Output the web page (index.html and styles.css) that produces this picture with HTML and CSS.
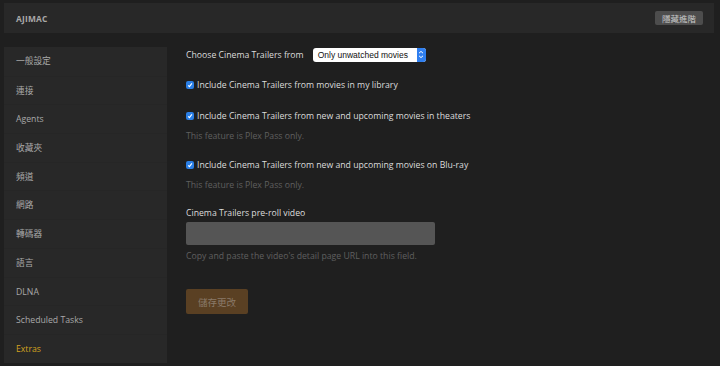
FILE: index.html
```html
<!DOCTYPE html>
<html lang="zh-Hant">
<head>
    <meta charset="UTF-8">
    <title>Extras - AJIMAC</title>
    <link rel="stylesheet" href="styles.css">
</head>
<body>
    <div class="top-bar">
        <div class="server-name">AJIMAC</div>
        <button class="advanced-btn">隱藏進階</button>
    </div>

    <div class="settings">
        <ul class="side-nav">
            <li>一般設定</li>
            <li>連接</li>
            <li>Agents</li>
            <li>收藏夾</li>
            <li>頻道</li>
            <li>網路</li>
            <li>轉碼器</li>
            <li>語言</li>
            <li>DLNA</li>
            <li>Scheduled Tasks</li>
            <li class="active">Extras</li>
        </ul>

        <div class="settings-form">
            <div class="form-row choose-row">
                <span>Choose Cinema Trailers from</span>
                <div class="select">
                    <span class="select-text">Only unwatched movies</span>
                    <span class="select-arrow">
                        <svg width="6" height="9" viewBox="0 0 6 9">
                            <path d="M1 3.2 L3 1.4 L5 3.2 M1 5.8 L3 7.6 L5 5.8" fill="none" stroke="#fff" stroke-width="1"/>
                        </svg>
                    </span>
                </div>
            </div>

            <div class="form-row library-row">
                <label class="check"><span class="box"><svg width="8" height="8" viewBox="0 0 8 8"><path d="M2.2 4.3 L3.4 5.6 L5.9 2.3" fill="none" stroke="#fff" stroke-width="1.1"/></svg></span>Include Cinema Trailers from movies in my library</label>
            </div>

            <div class="form-row">
                <label class="check"><span class="box"><svg width="8" height="8" viewBox="0 0 8 8"><path d="M2.2 4.3 L3.4 5.6 L5.9 2.3" fill="none" stroke="#fff" stroke-width="1.1"/></svg></span>Include Cinema Trailers from new and upcoming movies in theaters</label>
                <p class="help">This feature is Plex Pass only.</p>
            </div>

            <div class="form-row bluray-row">
                <label class="check"><span class="box"><svg width="8" height="8" viewBox="0 0 8 8"><path d="M2.2 4.3 L3.4 5.6 L5.9 2.3" fill="none" stroke="#fff" stroke-width="1.1"/></svg></span>Include Cinema Trailers from new and upcoming movies on Blu-ray</label>
                <p class="help">This feature is Plex Pass only.</p>
            </div>

            <div class="form-row">
                <div class="field-label">Cinema Trailers pre-roll video</div>
                <input class="text-input" type="text">
                <p class="help input-help">Copy and paste the video's detail page URL into this field.</p>
            </div>

            <button class="save-btn">儲存更改</button>
        </div>
    </div>
</body>
</html>
```

FILE: styles.css
```css
body {
    margin: 0;
    padding: 3px 6px 0 4px;
    background: #1f1f1f;
    font-family: 'Open Sans', 'Noto Sans CJK TC', sans-serif;
    font-size: 8.7px;
    color: #dcdcdc;
    height: 363px;
    overflow: hidden;
}

.top-bar {
    display: flex;
    justify-content: space-between;
    align-items: center;
    height: 30px;
    padding: 0 11px 0 12px;
    background: #282828;
}

.server-name {
    font-weight: 700;
    font-size: 8.4px;
    color: #a8a8a8;
    letter-spacing: 0.2px;
}

.advanced-btn {
    height: 14px;
    padding: 0 7px;
    border: none;
    border-radius: 2px;
    background: #4d4d4d;
    color: #c8c8c8;
    font-family: 'Noto Sans CJK TC', sans-serif;
    font-size: 8.5px;
    line-height: 14px;
}

.settings {
    display: flex;
    gap: 19px;
    margin-top: 14px;
}

.side-nav {
    list-style: none;
    margin: 0;
    padding: 0;
    width: 163px;
    background: #282828;
}

.side-nav li {
    height: 28.7px;
    line-height: 28.7px;
    padding-left: 12px;
    color: #a8a8a8;
    border-top: 1px solid #262626;
    box-sizing: border-box;
}

.side-nav li:first-child {
    border-top: none;
}

.side-nav li.active {
    color: #d4a21f;
}

.form-row {
    margin-bottom: 16px;
}

.library-row {
    margin-bottom: 17px;
}

.bluray-row {
    margin-bottom: 15px;
}

.choose-row {
    display: flex;
    align-items: center;
    gap: 9px;
    height: 15px;
    margin-bottom: 16px;
}

.select {
    display: flex;
    align-items: center;
    height: 14px;
    width: 113px;
    background: #fff;
    border-radius: 3px;
    overflow: hidden;
}

.select-text {
    flex: 1;
    padding-left: 5px;
    color: #111;
    font-family: 'Liberation Sans', sans-serif;
    font-size: 8.5px;
}

.select-arrow {
    display: flex;
    align-items: center;
    justify-content: center;
    width: 9px;
    height: 100%;
    background: #2f7ff0;
}

.check {
    display: flex;
    align-items: center;
    gap: 3px;
    height: 14px;
}

.box {
    display: flex;
    width: 8px;
    height: 8px;
    border-radius: 2px;
    background: #2b7fe6;
}

.help {
    margin: 7px 0 0;
    color: #5f5f5f;
}

.field-label {
    margin-top: 1px;
    line-height: 14px;
}

.text-input {
    display: block;
    width: 249px;
    height: 23px;
    margin: 2px 0 0;
    border: none;
    border-radius: 2px;
    background: #555;
    box-sizing: border-box;
}

.input-help {
    margin-top: 5px;
}

.save-btn {
    width: 62px;
    height: 25px;
    margin-top: 11px;
    border: none;
    border-radius: 2px;
    background: #5a4023;
    color: #8a7a6a;
    font-family: 'Noto Sans CJK TC', sans-serif;
    font-size: 9.5px;
}
```
